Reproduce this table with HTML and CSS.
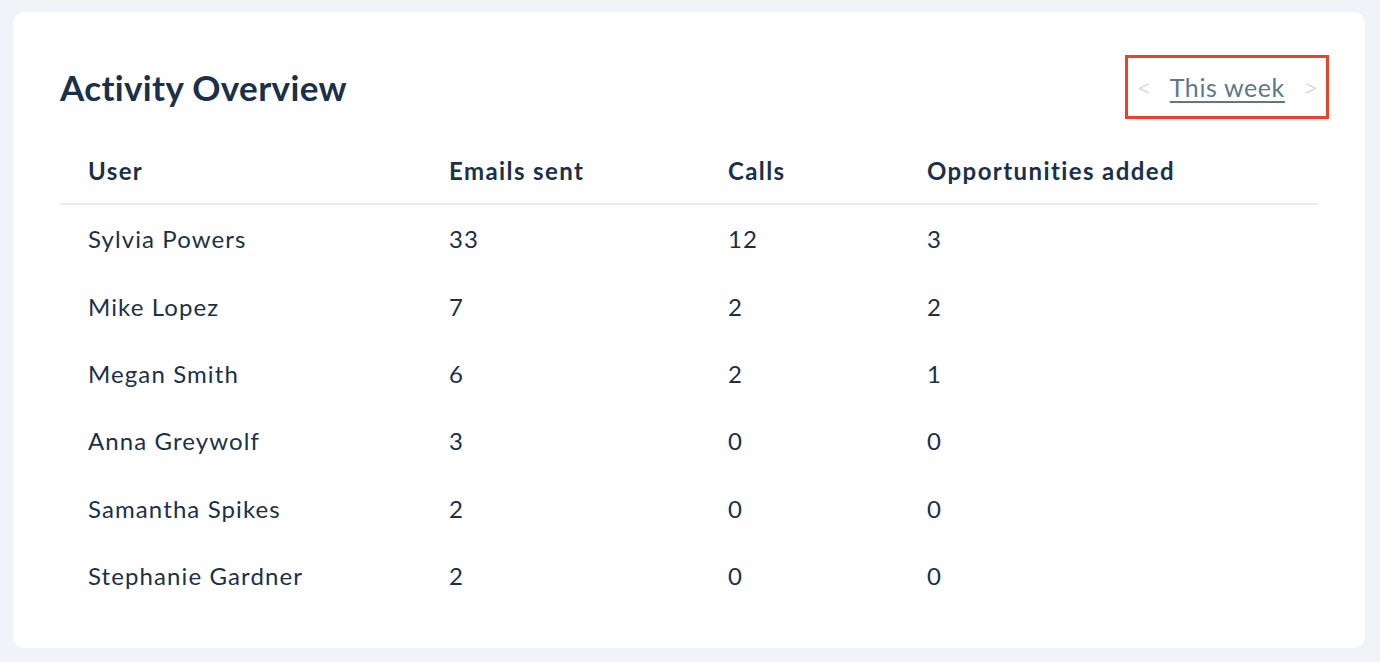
FILE: index.html
```html
<!DOCTYPE html>
<html>
<head>
<meta charset="utf-8">
<link rel="stylesheet" href="styles.css">
</head>
<body>
<div class="card">
  <div class="head">
    <h1 class="title">Activity Overview</h1>
    <div class="pager">
      <span class="arrow">&lt;</span>
      <a class="period" href="#">This week</a>
      <span class="arrow">&gt;</span>
    </div>
  </div>
  <div class="table">
    <div class="row hrow">
      <div class="cell">User</div>
      <div class="cell">Emails sent</div>
      <div class="cell">Calls</div>
      <div class="cell">Opportunities added</div>
    </div>
    <div class="row"><div class="cell">Sylvia Powers</div><div class="cell">33</div><div class="cell">12</div><div class="cell">3</div></div>
    <div class="row"><div class="cell">Mike Lopez</div><div class="cell">7</div><div class="cell">2</div><div class="cell">2</div></div>
    <div class="row"><div class="cell">Megan Smith</div><div class="cell">6</div><div class="cell">2</div><div class="cell">1</div></div>
    <div class="row"><div class="cell">Anna Greywolf</div><div class="cell">3</div><div class="cell">0</div><div class="cell">0</div></div>
    <div class="row"><div class="cell">Samantha Spikes</div><div class="cell">2</div><div class="cell">0</div><div class="cell">0</div></div>
    <div class="row"><div class="cell">Stephanie Gardner</div><div class="cell">2</div><div class="cell">0</div><div class="cell">0</div></div>
  </div>
</div>
</body>
</html>
```

FILE: styles.css
```css
html, body {
  margin: 0;
  padding: 0;
  background: #f0f3f8;
  font-family: Lato, "Open Sans", sans-serif;
  color: #1b304b;
}
body {
  padding: 12px 15px 14px 13px;
  height: 662px;
  box-sizing: border-box;
}
.card {
  background: #ffffff;
  border-radius: 12px;
  height: 636px;
  box-sizing: border-box;
  padding: 40px 47px 0 47px;
}
.head {
  display: flex;
  justify-content: space-between;
  align-items: center;
  height: 70px;
}
.title {
  margin: 0;
  font-size: 35px;
  font-weight: 700;
  color: #1b304b;
  letter-spacing: 0.35px;
}
.pager {
  display: flex;
  align-items: center;
  height: 64px;
  box-sizing: border-box;
  border: 3px solid #e8432d;
  padding: 0 8px 0 9px;
  margin-right: -11px;
  margin-top: 0;
  gap: 18px;
  font-size: 25px;
}
.arrow {
  color: #c3cdd7;
  font-size: 26px;
  font-weight: 300;
}
.period {
  color: #5e778b;
  text-decoration: underline;
  text-underline-offset: 4px;
  text-decoration-thickness: 2px;
  letter-spacing: 0.6px;
}
.table {
  margin-top: 15px;
}
.row {
  display: grid;
  grid-template-columns: 361px 279px 199px 1fr;
  height: 67.4px;
  align-items: center;
  font-size: 24px;
  letter-spacing: 1.1px;
}
.hrow {
  font-weight: 700;
  border-bottom: 2px solid #e8edf3;
  height: 66px;
  letter-spacing: 1.4px;
}
.cell {
  padding-left: 28px;
}
```
